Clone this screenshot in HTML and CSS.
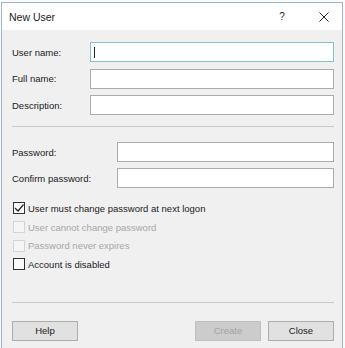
FILE: index.html
```html
<!DOCTYPE html>
<html lang="en">
<head>
    <meta charset="UTF-8">
    <title>New User</title>
    <link rel="stylesheet" href="styles.css">
</head>
<body>
    <div class="window">
        <div class="titlebar">
            <span class="title">New User</span>
            <span class="title-help">?</span>
            <span class="title-close">
                <svg width="10" height="10" viewBox="0 0 10 10">
                    <path d="M0.5 0.5 L9.5 9.5 M9.5 0.5 L0.5 9.5" stroke="#222" stroke-width="1" fill="none"/>
                </svg>
            </span>
        </div>

        <div class="content">
            <div class="fields names">
                <label>User name:</label>
                <div class="input focused"><span class="caret"></span></div>
                <label>Full name:</label>
                <div class="input"></div>
                <label>Description:</label>
                <div class="input"></div>
            </div>

            <div class="sep"></div>

            <div class="fields passwords">
                <label>Password:</label>
                <div class="input"></div>
                <label>Confirm password:</label>
                <div class="input"></div>
            </div>

            <ul class="checks">
                <li>
                    <span class="box">
                        <svg width="10" height="10" viewBox="0 0 10 10">
                            <path d="M1 5 L4 8 L9.5 1.5" stroke="#222" stroke-width="1.2" fill="none"/>
                        </svg>
                    </span>
                    User must change password at next logon
                </li>
                <li class="disabled"><span class="box"></span>User cannot change password</li>
                <li class="disabled"><span class="box"></span>Password never expires</li>
                <li><span class="box"></span>Account is disabled</li>
            </ul>

            <div class="sep bottom"></div>

            <div class="buttons">
                <button class="btn">Help</button>
                <span class="spacer"></span>
                <button class="btn" disabled>Create</button>
                <button class="btn">Close</button>
            </div>
        </div>
    </div>
</body>
</html>
```

FILE: styles.css
```css
body {
    margin: 0;
    padding: 2px 2px 0 1px;
    background-color: #fbfbfb;
    font-family: "Liberation Sans", Arial, sans-serif;
    font-size: 9.5px;
    color: #1a1a1a;
    height: 348px;
    box-sizing: border-box;
    overflow: hidden;
}

.window {
    border: 1px solid #9fb4c6;
    border-bottom: none;
    background-color: #f0f0f0;
    height: 346px;
    box-sizing: border-box;
}

.titlebar {
    display: flex;
    align-items: center;
    height: 27px;
    background-color: #fff;
    padding-left: 7px;
}

.title {
    flex: 1;
    font-size: 10.5px;
    color: #222;
}

.title-help {
    width: 48px;
    text-align: center;
    font-size: 10px;
    color: #222;
}

.title-close {
    width: 36px;
    display: flex;
    justify-content: center;
}

.content {
    padding: 0 8px 0 10px;
}

.fields {
    display: grid;
    grid-template-rows: 20px 20px;
    align-items: center;
}

.names {
    grid-template-columns: 78px 1fr;
    grid-template-rows: 20px 20px 20px;
    row-gap: 6.5px;
    margin-top: 12px;
}

.passwords {
    grid-template-columns: 105px 1fr;
    row-gap: 6px;
    margin-top: 15px;
}

.input {
    height: 20px;
    box-sizing: border-box;
    border: 1px solid #ababab;
    background-color: #fff;
    display: flex;
    align-items: center;
}

.input.focused {
    border-color: #7fc3cf;
}

.caret {
    width: 1px;
    height: 11px;
    margin-left: 3px;
    background-color: #222;
}

.sep {
    height: 1px;
    background-color: #c9c9c9;
    margin-top: 11px;
}

.sep.bottom {
    margin-top: 28px;
}

.checks {
    list-style-type: none;
    margin: 11px 0 0 0;
    padding: 0;
}

.checks li {
    display: flex;
    align-items: center;
    height: 18.7px;
    margin-left: 1px;
}

.box {
    width: 12px;
    height: 12px;
    box-sizing: border-box;
    border: 1px solid #333;
    background-color: #fafafa;
    margin-right: 3px;
    display: flex;
    align-items: center;
    justify-content: center;
}

.checks li.disabled {
    color: #a6a6a6;
}

.checks li.disabled .box {
    border-color: #d4d4d4;
    background-color: #f5f5f5;
}

.buttons {
    display: flex;
    gap: 7px;
    margin-top: 18px;
}

.spacer {
    flex: 1;
}

.btn {
    width: 66px;
    height: 20px;
    padding: 0;
    border: 1px solid #adadad;
    background-color: #e1e1e1;
    font-family: "Liberation Sans", Arial, sans-serif;
    font-size: 9.5px;
    color: #1a1a1a;
}

.btn:disabled {
    background-color: #cccccc;
    border-color: #bfbfbf;
    color: #a3a3a3;
}
```
